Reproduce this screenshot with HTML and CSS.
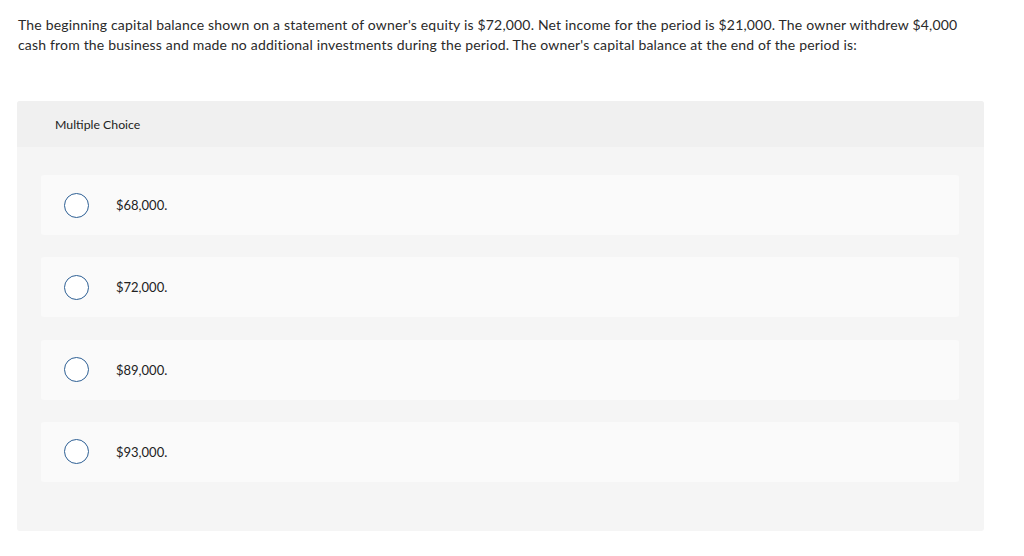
FILE: index.html
```html
<!DOCTYPE html>
<html>
<head>
<meta charset="utf-8">
<link rel="stylesheet" href="styles.css">
</head>
<body>
<div class="page">
  <p class="question">The beginning capital balance shown on a statement of owner's equity is $72,000. Net income for the period is $21,000. The owner withdrew $4,000 cash from the business and made no additional investments during the period. The owner's capital balance at the end of the period is:</p>
  <div class="panel">
    <div class="panel-head">Multiple Choice</div>
    <div class="panel-body">
      <div class="option"><span class="radio"></span><span class="label">$68,000.</span></div>
      <div class="option"><span class="radio"></span><span class="label">$72,000.</span></div>
      <div class="option"><span class="radio"></span><span class="label">$89,000.</span></div>
      <div class="option"><span class="radio"></span><span class="label">$93,000.</span></div>
    </div>
  </div>
</div>
</body>
</html>
```
FILE: styles.css
```css
html, body {
  margin: 0;
  padding: 0;
  background: #ffffff;
}
body {
  font-family: "Lato", "Liberation Sans", sans-serif;
  color: #222222;
}
.page {
  padding: 15px 40px 0 17px;
}
.question {
  margin: 0 0 46px 1px;
  width: 966px;
  font-size: 14px;
  line-height: 20px;
  letter-spacing: 0.18px;
  color: #2a2a2a;
}
.panel {
  width: 967px;
  background: #f5f5f5;
  border-radius: 3px;
  overflow: hidden;
}
.panel-head {
  height: 46px;
  background: #f0f0f0;
  display: flex;
  align-items: center;
  padding-left: 38px;
  font-size: 12.3px;
  color: #222;
}
.panel-body {
  padding: 28px 25px 49px 24px;
  display: flex;
  flex-direction: column;
  gap: 22.3px;
}
.option {
  height: 60px;
  background: #fafafa;
  border-radius: 3px;
  display: flex;
  align-items: center;
  padding-left: 23px;
}
.radio {
  width: 23px;
  height: 23px;
  border: 1.2px solid #2d5f94;
  border-radius: 50%;
  background: #fff;
  flex: none;
}
.label {
  margin-left: 27px;
  font-size: 13px;
  color: #222;
}
```
